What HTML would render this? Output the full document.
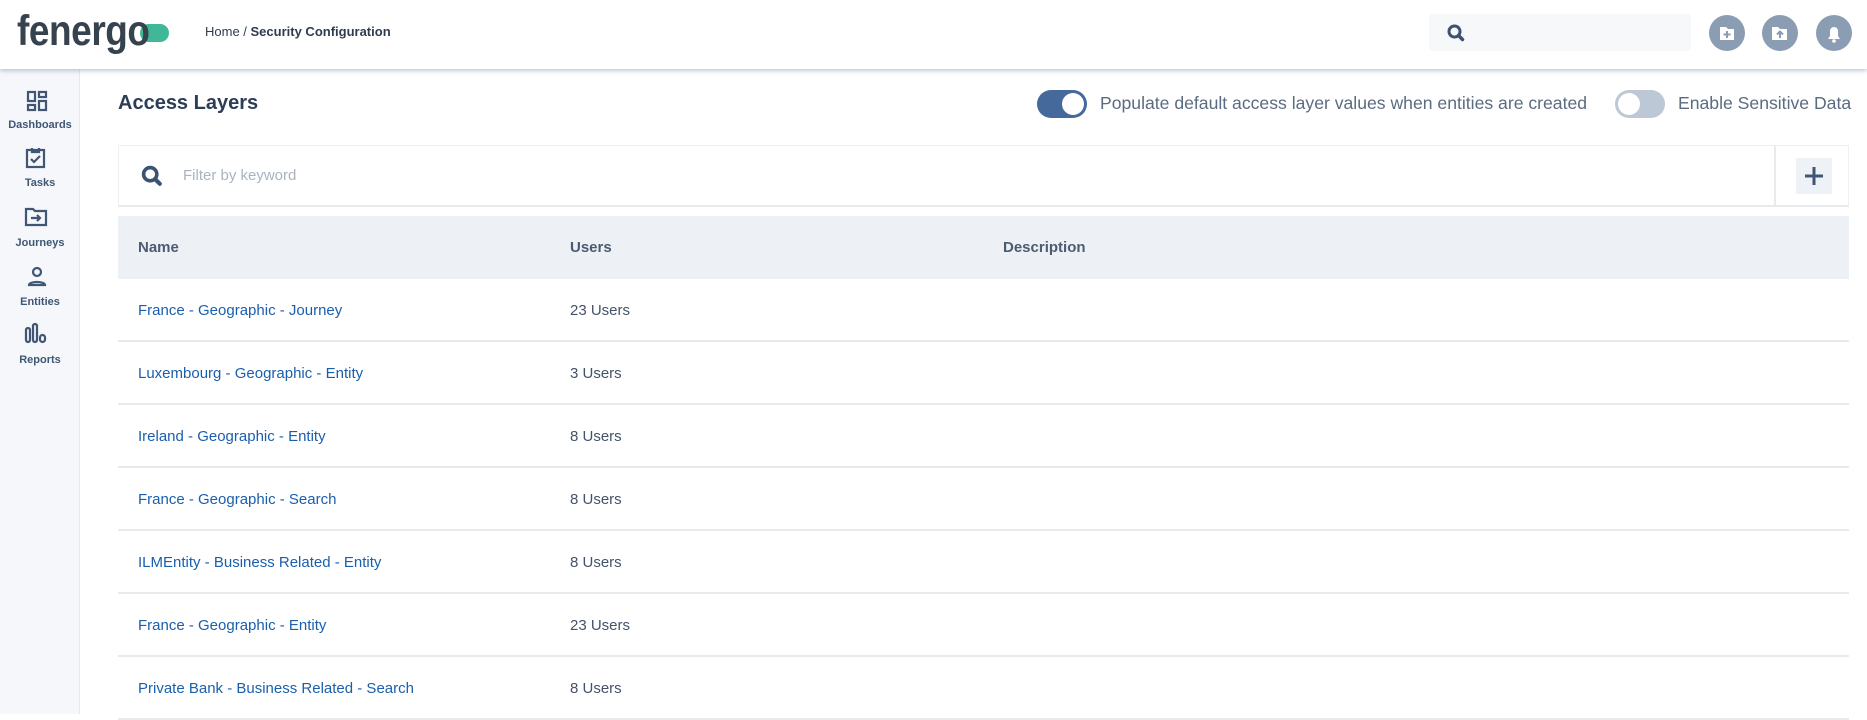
<!DOCTYPE html>
<html><head><meta charset="utf-8"><style>
*{box-sizing:border-box;margin:0;padding:0}
body{width:1867px;height:714px;overflow:hidden;background:#fff;font-family:"Liberation Sans",sans-serif;position:relative}
.hdr{position:absolute;left:0;top:0;width:1867px;height:69px;background:#fff;box-shadow:0 2px 4px rgba(120,140,170,.45);z-index:5}
.side{position:absolute;left:0;top:69px;width:80px;height:645px;background:#f5f7fa;border-right:1px solid #e3e8ee}
.nav{position:absolute;left:0;width:80px;text-align:center;font-size:11px;font-weight:bold;color:#3f5775}
.abs{position:absolute}
.row{position:absolute;left:118px;width:1731px;height:63px;border-bottom:2px solid #e8ebee;font-size:15px}
.row span{position:absolute;top:0;line-height:63px}
.n{left:20px;color:#1a5fae}.u{left:452px;color:#44536a}
</style></head><body>
<div class="hdr">
 <div class="abs" style="left:140px;top:24px;width:29px;height:18px;border-radius:9px;background:#40b796"></div>
 <div class="abs" style="left:17px;top:7px;font-size:43px;font-weight:bold;color:#37424f;letter-spacing:-0.5px;transform:scaleX(0.86);transform-origin:0 0">fenergo</div>
 <div class="abs" style="left:205px;top:24px;font-size:13px;color:#2f3c4e">Home / <b>Security Configuration</b></div>
 <div class="abs" style="left:1429px;top:14px;width:262px;height:37px;background:#f6f8fa;border-radius:3px"></div>
 <svg class="abs" style="left:1446px;top:23px" width="20" height="20" viewBox="0 0 20 20"><circle cx="8.5" cy="8.5" r="5.5" fill="none" stroke="#3b5373" stroke-width="3"/><path d="M12.5 12.5l4 4" stroke="#3b5373" stroke-width="3.5" stroke-linecap="round"/></svg>
 <svg class="abs" style="left:1709px;top:15px" width="36" height="36"><circle cx="18" cy="18" r="18" fill="#8b9db2"/><path d="M11 12h6l2 2h6v11H11z" fill="#fff"/><path d="M18 16v7M14.5 19.5h7" stroke="#8b9db2" stroke-width="2"/></svg>
 <svg class="abs" style="left:1762px;top:15px" width="36" height="36"><circle cx="18" cy="18" r="18" fill="#8b9db2"/><path d="M10 12h6l2 2h7v11H10z" fill="#fff"/><path d="M18 23v-6M15 19.5l3-3 3 3" stroke="#8b9db2" stroke-width="2" fill="none"/></svg>
 <svg class="abs" style="left:1816px;top:15px" width="36" height="36"><circle cx="18" cy="18" r="18" fill="#8b9db2"/><path d="M12 24h12l-2-3v-5a4 4 0 0 0-8 0v5z" fill="#fff"/><circle cx="18" cy="26" r="1.8" fill="#fff"/></svg>
</div>
<div class="side">
 <svg class="abs" style="left:26px;top:21px" width="22" height="22" viewBox="0 0 22 22" fill="none" stroke="#3f5775" stroke-width="2.2"><rect x="2" y="2" width="7" height="9"/><rect x="13" y="2" width="7" height="5"/><rect x="2" y="15" width="7" height="5"/><rect x="13" y="11" width="7" height="9"/></svg>
 <div class="nav" style="top:50px">Dashboards</div>
 <svg class="abs" style="left:25px;top:78px" width="22" height="22" viewBox="0 0 22 22" fill="none" stroke="#3f5775" stroke-width="2.2"><rect x="2" y="3" width="17" height="17"/><path d="M7 1v4h7V1" /><path d="M6 12l3 3 6-6"/></svg>
 <div class="nav" style="top:108px">Tasks</div>
 <svg class="abs" style="left:24px;top:138px" width="24" height="20" viewBox="0 0 24 20" fill="none" stroke="#3f5775" stroke-width="2.2"><path d="M2 2h7l2 2h11v14H2z"/><path d="M7 11h9M13 8l3 3-3 3"/></svg>
 <div class="nav" style="top:168px">Journeys</div>
 <svg class="abs" style="left:27px;top:197px" width="20" height="22" viewBox="0 0 20 22" fill="none" stroke="#3f5775" stroke-width="2.2"><circle cx="10" cy="6" r="4"/><path d="M2 19c0-4 16-4 16 0z"/></svg>
 <div class="nav" style="top:227px">Entities</div>
 <svg class="abs" style="left:24px;top:253px" width="24" height="22" viewBox="0 0 24 22" fill="none" stroke="#3f5775" stroke-width="2.2"><rect x="2" y="6" width="4" height="14" rx="2"/><rect x="9" y="2" width="4" height="18" rx="2"/><rect x="16" y="13" width="5" height="7" rx="2.5"/></svg>
 <div class="nav" style="top:285px">Reports</div>
</div>
<div class="abs" style="left:118px;top:92px;font-size:20px;font-weight:bold;color:#2c3e55">Access Layers</div>
<div class="abs" style="left:1037px;top:90px;width:50px;height:28px;border-radius:14px;background:#44699a"></div>
<div class="abs" style="left:1062px;top:93px;width:22px;height:22px;border-radius:11px;background:#fff"></div>
<div class="abs" style="left:1100px;top:93px;font-size:17.6px;color:#5b6b80">Populate default access layer values when entities are created</div>
<div class="abs" style="left:1615px;top:90px;width:50px;height:28px;border-radius:14px;background:#bcc8d6"></div>
<div class="abs" style="left:1618px;top:93px;width:22px;height:22px;border-radius:11px;background:#fff"></div>
<div class="abs" style="left:1678px;top:93px;font-size:17.6px;color:#5b6b80">Enable Sensitive Data</div>
<div class="abs" style="left:118px;top:145px;width:1731px;height:62px;border:1px solid #eef1f4;border-bottom:2px solid #e8ebee"></div>
<div class="abs" style="left:1774px;top:145px;width:2px;height:62px;background:#e8ebee"></div>
<svg class="abs" style="left:140px;top:164px" width="24" height="24" viewBox="0 0 20 20"><circle cx="8.5" cy="8.5" r="5.5" fill="none" stroke="#3b5373" stroke-width="3"/><path d="M12.5 12.5l4 4" stroke="#3b5373" stroke-width="3.5" stroke-linecap="round"/></svg>
<div class="abs" style="left:183px;top:167px;font-size:15px;color:#a9b3c0">Filter by keyword</div>
<div class="abs" style="left:1796px;top:158px;width:36px;height:36px;background:#eef2f6;border-radius:2px"></div>
<svg class="abs" style="left:1804px;top:166px" width="20" height="20"><path d="M10 1v18M1 10h18" stroke="#3f5775" stroke-width="3"/></svg>
<div class="abs" style="left:118px;top:216px;width:1731px;height:63px;background:#edf1f5;font-size:15px;font-weight:bold;color:#4b5c72">
 <span class="abs" style="left:20px;top:23px">Name</span><span class="abs" style="left:452px;top:23px">Users</span><span class="abs" style="left:885px;top:23px">Description</span>
</div>
<div class="row" style="top:279px"><span class="n">France - Geographic - Journey</span><span class="u">23 Users</span></div>
<div class="row" style="top:342px"><span class="n">Luxembourg - Geographic - Entity</span><span class="u">3 Users</span></div>
<div class="row" style="top:405px"><span class="n">Ireland - Geographic - Entity</span><span class="u">8 Users</span></div>
<div class="row" style="top:468px"><span class="n">France - Geographic - Search</span><span class="u">8 Users</span></div>
<div class="row" style="top:531px"><span class="n">ILMEntity - Business Related - Entity</span><span class="u">8 Users</span></div>
<div class="row" style="top:594px"><span class="n">France - Geographic - Entity</span><span class="u">23 Users</span></div>
<div class="row" style="top:657px"><span class="n">Private Bank - Business Related - Search</span><span class="u">8 Users</span></div>
</body></html>
